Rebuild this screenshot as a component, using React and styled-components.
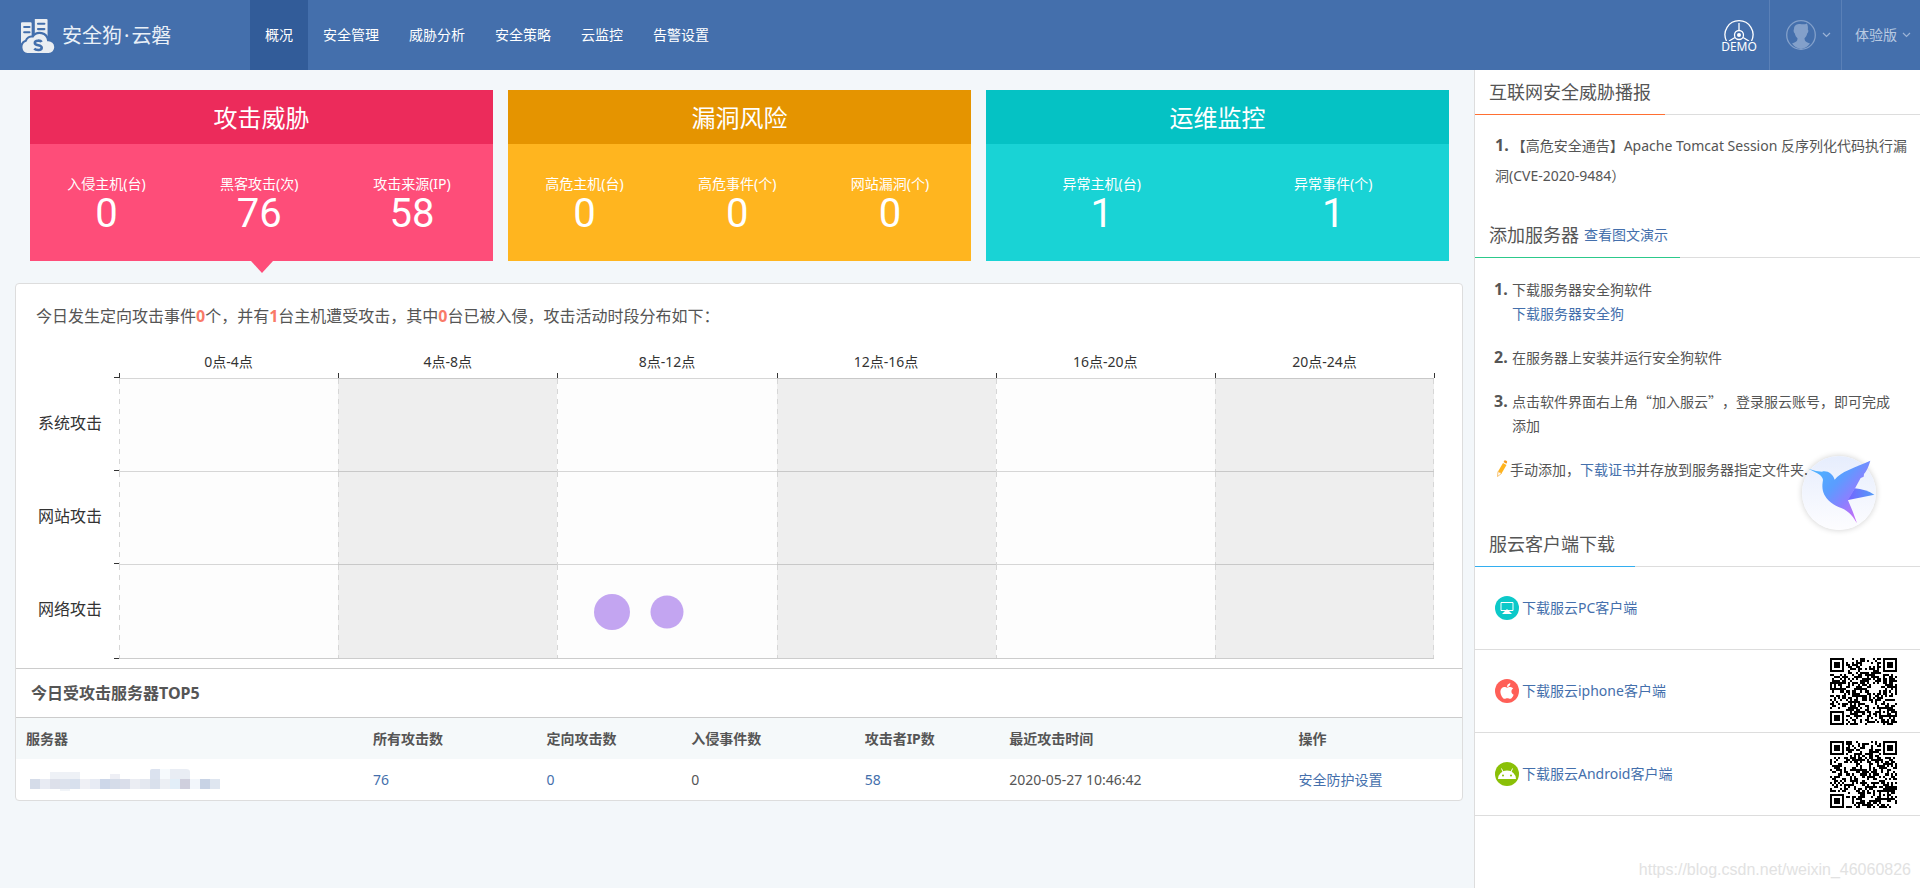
import React from 'react'
import styled, { createGlobalStyle } from 'styled-components'
import { FaApple } from 'react-icons/fa'

const navItems = ['概况', '安全管理', '威胁分析', '安全策略', '云监控', '告警设置']

const cards = [
  {
    title: '攻击威胁',
    head: '#ec2b5b',
    body: '#fe4d79',
    active: true,
    stats: [
      { label: '入侵主机(台)', value: 0 },
      { label: '黑客攻击(次)', value: 76 },
      { label: '攻击来源(IP)', value: 58 },
    ],
  },
  {
    title: '漏洞风险',
    head: '#e59400',
    body: '#ffb51f',
    stats: [
      { label: '高危主机(台)', value: 0 },
      { label: '高危事件(个)', value: 0 },
      { label: '网站漏洞(个)', value: 0 },
    ],
  },
  {
    title: '运维监控',
    head: '#05c2c4',
    body: '#19d3d5',
    stats: [
      { label: '异常主机(台)', value: 1 },
      { label: '异常事件(个)', value: 1 },
    ],
  },
]

const periods = ['0点-4点', '4点-8点', '8点-12点', '12点-16点', '16点-20点', '20点-24点']

const attackRows = [
  { name: '系统攻击', events: [] },
  { name: '网站攻击', events: [] },
  {
    name: '网络攻击',
    events: [
      { hour: 9, size: 36 },
      { hour: 10, size: 33 },
    ],
  },
]

const columns = [
  { name: '服务器', width: '24%' },
  { name: '所有攻击数', width: '12%' },
  { name: '定向攻击数', width: '10%' },
  { name: '入侵事件数', width: '12%' },
  { name: '攻击者IP数', width: '10%' },
  { name: '最近攻击时间', width: '20%' },
  { name: '操作', width: '12%' },
]

const maskColors = [
  '#d5dce9', '#e8ebf3', '#dde0ea', '#dce2ed', '#d8e0ed', '#eff0f5', '#e7ebf4',
  '#cdd7e9', '#d5dce9', '#dadeea', '#ebedf3', '#e4e8f0', '#d9e0ec', '#eceff4',
  '#e2eef8', '#cfcfdd', '#f2f6fb', '#c8d3e5', '#dfe6f0',
]

const LogoIcon = () => (
  <svg width='34' height='34' viewBox='1 1 32 32' aria-hidden='true'>
    <g fill='#ebeef2'>
      <path d='M1 5a1 1 0 0 1 1-1h8a1 1 0 0 1 1 1v13l-5 3-5 7z' />
      <path d='M14 1h11a1 1 0 0 1 1 1v16H14z' />
    </g>
    <path
      d='M4 8.500h5M4 13.500h5M17 5.500h6M17 10.500h6'
      stroke='#446fac'
      strokeWidth='2'
      strokeLinecap='round'
    />
    <path
      d='M7 34a6.500 6.500 0 0 1-1.500-12.500A6 6 0 0 1 12 17.500a8 8 0 0 1 14.500 3.500A6.500 6.500 0 0 1 27 34z'
      fill='#ebeef2'
      stroke='#446fac'
      strokeWidth='2'
    />
    <path
      d='M20.500 22.500c-1-1.500-6.500-1.800-6.500 1 0 3 6.500 1.500 6.500 4.500 0 2.800-5.500 2.500-7 .8'
      fill='none'
      stroke='#446fac'
      strokeWidth='2.400'
    />
  </svg>
)

const DemoIcon = () => (
  <svg width='32' height='21' viewBox='0 0 32 21' fill='none' aria-hidden='true'>
    <path d='M3.500 21a14 14 0 1 1 25 0' stroke='#fff' strokeWidth='1.300' />
    <path d='M16 3v7M12 17.500l-6 3.500M20 17.500l6 3.500' stroke='#fff' strokeWidth='1.300' />
    <circle cx='16' cy='15' r='4.500' stroke='#fff' strokeWidth='1.300' />
    <circle cx='16' cy='15' r='2' fill='#fff' />
  </svg>
)

const AvatarIcon = () => (
  <svg width='32' height='32' viewBox='0 0 32 32' aria-hidden='true'>
    <circle cx='16' cy='16' r='14.300' fill='none' stroke='#83a0ca' strokeWidth='1.300' />
    <path
      d='M9 10c0-4 3-5 6-5 2 0 4 1 7-.5.8 2 1.200 4 .8 6 1 .5.600 3-.5 3.700-.5 2.300-1.500 4-2.800 5 .2 3 1.500 4 5.500 5.300A14 14 0 0 1 16 30a14 14 0 0 1-9-5.500c4-1.300 5.500-2.300 5.500-5.300-1.300-1-2.300-2.700-2.800-5-1.100-.7-1.500-3.200-.7-4.200z'
      fill='#83a0ca'
    />
  </svg>
)

const Chevron = () => (
  <svg width='9' height='6' viewBox='0 0 9 6' fill='none' aria-hidden='true'>
    <path d='M1 1l3.500 3.500L8 1' stroke='#9db4d6' strokeWidth='1.200' />
  </svg>
)

const PencilIcon = () => (
  <svg width='12' height='18' viewBox='0 0 12 18' aria-hidden='true'>
    <path d='M7.500 2l1-1.500c.5-.6 3 .9 2.700 1.600l-.8 1.600z' fill='#f79a1c' />
    <path d='M7 3l3.500 2-5 8.500L2 11.500z' fill='#ffb41e' />
    <path d='M2 11.500l3.500 2-4 3z' fill='#fff' stroke='#f5b552' strokeWidth='.8' />
  </svg>
)

const BirdIcon = () => (
  <svg width='74' height='74' viewBox='0 0 222 222' aria-hidden='true'>
    <defs>
      <linearGradient id='bird' x1='0.1' y1='0.2' x2='0.85' y2='0.9'>
        <stop offset='0' stopColor='#4fb0ff' />
        <stop offset='0.35' stopColor='#5b9dff' />
        <stop offset='0.65' stopColor='#8a80ff' />
        <stop offset='1' stopColor='#cf6cf5' />
      </linearGradient>
      <linearGradient id='tail' x1='0' y1='0' x2='1' y2='0'>
        <stop offset='0' stopColor='#7463ff' />
        <stop offset='1' stopColor='#539df8' />
      </linearGradient>
    </defs>
    <path d='M158 97q32 2 59 19l-82 17z' fill='url(#tail)' />
    <path
      d='M19 38q22 8 41 9c16-4 32 6 38 24 17-24 60-36 107-57-5 18-12 32-19 40l-1 8-9 4-16 29-22 38c10 22 19 45 27 69-10-17-20-31-39-42-22-11-43-16-59-44-8-18-6-32-4-44-1-13-14-20-44-34z'
      fill='url(#bird)'
    />
  </svg>
)

const PcIcon = () => (
  <svg width='14' height='14' viewBox='0 0 14 14' fill='none' aria-hidden='true'>
    <path d='M1 1.500h12v8H1z' stroke='#fff' />
    <path d='M7 8l5 5H2z' fill='#fff' />
  </svg>
)

const AndroidIcon = () => (
  <svg width='20' height='14' viewBox='0 0 20 14' aria-hidden='true'>
    <path d='M1 12a9 8.500 0 0 1 18 0z' fill='#fff' />
    <path d='M6 5L4.500 1.500M14 5l1.500-3.500' stroke='#fff' />
    <circle cx='6' cy='8.500' r='1' fill='#8ac007' />
    <circle cx='14' cy='8.500' r='1' fill='#8ac007' />
  </svg>
)

const QR_SIZE = 33

const inSquare = (x, y, left, top, size) =>
  x >= left && x < left + size && y >= top && y < top + size

// finder and alignment squares are fixed, the rest is filled from the seed
const buildQr = (seed) => {
  let state = seed
  let path = ''
  const finders = [
    [0, 0],
    [QR_SIZE - 7, 0],
    [0, QR_SIZE - 7],
  ]
  for (let y = 0; y < QR_SIZE; y++) {
    for (let x = 0; x < QR_SIZE; x++) {
      state = (state * 1103515245 + 12345) % 2147483648
      let dark = state / 2147483648 > 0.5
      finders.forEach(([fx, fy]) => {
        if (inSquare(x, y, fx - 1, fy - 1, 9)) {
          dark =
            inSquare(x, y, fx, fy, 7) &&
            (!inSquare(x, y, fx + 1, fy + 1, 5) || inSquare(x, y, fx + 2, fy + 2, 3))
        }
      })
      if (inSquare(x, y, 24, 24, 5)) {
        dark = !inSquare(x, y, 25, 25, 3) || (x === 26 && y === 26)
      }
      if (dark) path += `M${x} ${y}h1v1h-1z`
    }
  }
  return path
}

const QrCode = ({ seed, label }) => (
  <svg
    width='67'
    height='67'
    viewBox={`0 0 ${QR_SIZE} ${QR_SIZE}`}
    shapeRendering='crispEdges'
    role='img'
    aria-label={label}
  >
    <path d={buildQr(seed)} />
  </svg>
)

const MaskedName = () => (
  <svg width='190' height='22' viewBox='0 0 190 22' aria-hidden='true'>
    <path d='M20 3h30v8H20z' fill='#eef1f6' />
    <path d='M80 5h10v6H80z' fill='#eeeff5' />
    <path d='M120 2q0-2 2-2h8v11h-10z' fill='#dbe2ef' />
    <path d='M130 0h10v11h-10z' fill='#f6fafd' />
    <path d='M140 0h16q4 0 4 3v8h-20z' fill='#e9edf4' />
    <path d='M30 19h10v3H30z' fill='#f1f4f8' />
    {maskColors.map((color, index) => (
      <rect key={index} x={index * 10} y='10' width='10' height='10' fill={color} />
    ))}
  </svg>
)

const Header = () => (
  <TopBar>
    <Brand href='#'>
      <LogoIcon />
      <span>
        安全狗<i>·</i>云磐
      </span>
    </Brand>
    <Nav>
      {navItems.map((item, index) => (
        <NavLink key={item} href='#' $active={index === 0}>
          {item}
        </NavLink>
      ))}
    </Nav>
    <DemoButton type='button'>
      <DemoIcon />
      DEMO
    </DemoButton>
    <TopButton type='button' aria-label='账号' $width={72}>
      <AvatarIcon />
      <Chevron />
    </TopButton>
    <TopButton type='button' $width={79}>
      体验版
      <Chevron />
    </TopButton>
  </TopBar>
)

const Cards = () => (
  <CardRow>
    {cards.map((card) => (
      <Card key={card.title} $bg={card.body} $active={card.active}>
        <CardTitle $bg={card.head}>{card.title}</CardTitle>
        <Stats>
          {card.stats.map((stat) => (
            <Stat key={stat.label} $width={card.stats.length === 3 ? '33%' : '50%'}>
              <dt>{stat.label}</dt>
              <dd>{stat.value}</dd>
            </Stat>
          ))}
        </Stats>
      </Card>
    ))}
  </CardRow>
)

const AttackChart = () => (
  <Chart>
    <span />
    {periods.map((period) => (
      <Period key={period}>{period}</Period>
    ))}
    {attackRows.map((row) => (
      <React.Fragment key={row.name}>
        <RowName>{row.name}</RowName>
        {periods.map((period, index) => (
          <Cell key={period} $dark={index % 2 === 1}>
            {row.events
              .filter(({ hour }) => Math.floor(hour / 4) === index)
              .map(({ hour, size }) => (
                <Bubble
                  key={hour}
                  style={{ left: `${(hour % 4) * 25}%`, width: size, height: size }}
                />
              ))}
          </Cell>
        ))}
      </React.Fragment>
    ))}
  </Chart>
)

const ServerTable = () => (
  <Table>
    <thead>
      <tr>
        {columns.map(({ name, width }) => (
          <Th key={name} $width={width}>
            {name}
          </Th>
        ))}
      </tr>
    </thead>
    <tbody>
      <tr>
        <td>
          <MaskedName />
        </td>
        <td>
          <Link href='#'>76</Link>
        </td>
        <td>
          <Link href='#'>0</Link>
        </td>
        <td>0</td>
        <td>
          <Link href='#'>58</Link>
        </td>
        <td>2020-05-27 10:46:42</td>
        <td>
          <Link href='#'>安全防护设置</Link>
        </td>
      </tr>
    </tbody>
  </Table>
)

const Sidebar = () => (
  <Aside>
    <SideTitle>
      <SideName $color='#ff6f32' $width={190}>
        互联网安全威胁播报
      </SideName>
    </SideTitle>
    <News>
      <b>1.</b>
      【高危安全通告】Apache Tomcat Session 反序列化代码执行漏洞(CVE-2020-9484）
    </News>
    <SideTitle>
      <SideName $color='#2cc98b' $width={205}>
        添加服务器
        <Link href='#'>查看图文演示</Link>
      </SideName>
    </SideTitle>
    <Steps>
      <Step>
        <b>1.</b>
        <div>
          下载服务器安全狗软件
          <br />
          <Link href='#'>下载服务器安全狗</Link>
        </div>
      </Step>
      <Step>
        <b>2.</b>
        <div>在服务器上安装并运行安全狗软件</div>
      </Step>
      <Step>
        <b>3.</b>
        <div>点击软件界面右上角“加入服云”，登录服云账号，即可完成添加</div>
      </Step>
      <Manual>
        <PencilIcon />
        <div>
          手动添加，<Link href='#'>下载证书</Link>并存放到服务器指定文件夹.
        </div>
      </Manual>
    </Steps>
    <SideTitle>
      <SideName $color='#33aef0' $width={160}>
        服云客户端下载
      </SideName>
    </SideTitle>
    <Download>
      <Badge $bg='#0cc9c9'>
        <PcIcon />
      </Badge>
      <Link href='#'>下载服云PC客户端</Link>
    </Download>
    <Download>
      <Badge $bg='#ff5f57'>
        <FaApple size={18} />
      </Badge>
      <Link href='#'>下载服云iphone客户端</Link>
      <QrCode seed={4711} label='iphone客户端' />
    </Download>
    <Download>
      <Badge $bg='#8ac007'>
        <AndroidIcon />
      </Badge>
      <Link href='#'>下载服云Android客户端</Link>
      <QrCode seed={90125} label='Android客户端' />
    </Download>
    <Watermark>https://blog.csdn.net/weixin_46060826</Watermark>
  </Aside>
)

const App = () => {
  return (
    <>
      <GlobalStyle />
      <Header />
      <Page>
        <Main>
          <Cards />
          <Panel>
            <Summary>
              今日发生定向攻击事件<b>0</b>个，并有<b>1</b>台主机遭受攻击，其中<b>0</b>
              台已被入侵，攻击活动时段分布如下：
            </Summary>
            <AttackChart />
            <PanelTitle>今日受攻击服务器TOP5</PanelTitle>
            <ServerTable />
          </Panel>
        </Main>
        <Sidebar />
      </Page>
      <FloatButton type='button' aria-label='迅雷'>
        <BirdIcon />
      </FloatButton>
    </>
  )
}

const GlobalStyle = createGlobalStyle`
  * {
    box-sizing: border-box;
  }
  body {
    margin: 0;
    background: #f3f7fa;
    color: #555;
    font-family: 'Noto Sans', 'Noto Sans CJK SC', sans-serif;
    font-size: 14px;
    line-height: 24px;
  }
  h2, p, dl, dd, ol {
    margin: 0;
    padding: 0;
  }
  button {
    border: 0;
    padding: 0;
    background: none;
    font: inherit;
    cursor: pointer;
  }
  svg {
    display: block;
    flex: none;
  }
`

const Link = styled.a`
  color: #446fac;
  font-size: 14px;
  text-decoration: none;
`

const TopBar = styled.header`
  display: flex;
  height: 70px;
  background: #446fac;
`

const Brand = styled.a`
  display: flex;
  align-items: center;
  gap: 7px;
  width: 250px;
  padding: 2px 0 0 21px;
  color: #e9eff7;
  font-size: 20px;
  text-decoration: none;
  i {
    padding: 0 2px;
    font-style: normal;
  }
`

const Nav = styled.nav`
  display: flex;
  flex: 1;
`

const NavLink = styled.a`
  padding: 0 15px;
  line-height: 70px;
  color: #fff;
  text-decoration: none;
  background: ${({ $active }) => ($active ? '#325c99' : 'none')};
`

const DemoButton = styled.button`
  display: flex;
  flex-direction: column;
  align-items: center;
  justify-content: center;
  width: 60px;
  color: #fff;
  && {
    padding-top: 2px;
    font-size: 12px;
    line-height: 12px;
  }
`

const TopButton = styled.button`
  display: flex;
  align-items: center;
  justify-content: center;
  gap: 5px;
  width: ${({ $width }) => $width}px;
  color: #b9cae2;
  && {
    padding-left: 4px;
    border-left: 1px solid #5a80b7;
  }
`

const Page = styled.div`
  display: flex;
  min-height: calc(100vh - 70px);
`

const Main = styled.main`
  flex: 1;
  min-width: 0;
  padding: 20px 11px 20px 15px;
`

const CardRow = styled.div`
  display: grid;
  grid-template-columns: repeat(3, 1fr);
  gap: 15px;
  padding: 0 14px 0 15px;
`

const Card = styled.section`
  position: relative;
  color: #fff;
  text-align: center;
  background: ${({ $bg }) => $bg};
  &::after {
    content: '';
    display: ${({ $active }) => ($active ? 'block' : 'none')};
    position: absolute;
    top: 100%;
    left: calc(50% - 11px);
    border: 11px solid transparent;
    border-top: 12px solid ${({ $bg }) => $bg};
    border-bottom: 0;
  }
`

const CardTitle = styled.h2`
  && {
    padding-top: 2px;
  }
  font-size: 24px;
  font-weight: 400;
  line-height: 52px;
  background: ${({ $bg }) => $bg};
`

const Stats = styled.dl`
  display: flex;
  && {
    padding: 30px 0 27px;
  }
`

const Stat = styled.div`
  width: ${({ $width }) => $width};
  line-height: 20px;
  dd {
    font-family: Roboto, sans-serif;
    font-size: 40px;
    line-height: 40px;
  }
`

const Panel = styled.section`
  margin-top: 22px;
  background: #fff;
  border: 1px solid #ddd;
  border-radius: 4px;
`

const Summary = styled.p`
  && {
    padding: 20px 20px 24px;
  }
  font-size: 16px;
  b {
    color: #f97a68;
  }
`

const Chart = styled.div`
  display: grid;
  grid-template-columns: 103px repeat(6, 1fr);
  grid-template-rows: 26px 93px 93px 94px;
  margin: 0 28px 10px 0;
  color: #333;
`

const Period = styled.div`
  position: relative;
  text-align: center;
  line-height: 20px;
  &::before,
  &:nth-child(7)::after {
    content: '';
    position: absolute;
    bottom: 0;
    left: 0;
    width: 1px;
    height: 5px;
    background: #333;
  }
  &:nth-child(7)::after {
    left: 100%;
  }
`

const RowName = styled.div`
  position: relative;
  padding-left: 22px;
  font-size: 16px;
  line-height: 90px;
  &::before,
  &:nth-last-child(7)::after {
    content: '';
    position: absolute;
    top: -1px;
    right: 0;
    width: 5px;
    height: 1px;
    background: #333;
  }
  &:nth-last-child(7)::after {
    top: 100%;
  }
`

const dashes = 'repeating-linear-gradient(#d6d6d6 0 5px, transparent 5px 10px)'

const Cell = styled.div`
  position: relative;
  border-top: 1px solid ${({ $dark }) => ($dark ? '#c8c8c8' : '#d6d6d6')};
  background: ${dashes} left / 1px 100% no-repeat,
    ${({ $dark }) => ($dark ? '#eee' : '#fdfdfd')};
  &:nth-child(7n) {
    background: ${dashes} left / 1px 100% no-repeat, ${dashes} right / 1px 100% no-repeat, #eee;
  }
  &:nth-last-child(-n + 6) {
    box-shadow: 0 1px #ccc;
  }
`

const Bubble = styled.span`
  position: absolute;
  top: 50%;
  border-radius: 50%;
  background: #c3a5f1;
  transform: translate(-50%, -50%);
`

const PanelTitle = styled.h2`
  && {
    padding: 0 15px;
  }
  font-size: 16px;
  line-height: 48px;
  border-top: 1px solid #ccc;
  border-bottom: 1px solid #ccc;
`

const Table = styled.table`
  width: 100%;
  table-layout: fixed;
  border-collapse: collapse;
  td {
    height: 41px;
    padding: 0 10px;
  }
  td svg {
    margin-left: 4px;
  }
`

const Th = styled.th`
  width: ${({ $width }) => $width};
  height: 41px;
  padding: 0 10px;
  text-align: left;
  background: #f5f9fa;
`

const Aside = styled.aside`
  position: relative;
  width: 446px;
  background: #fff;
  border-left: 1px solid #ddd;
`

const SideTitle = styled.div`
  display: flex;
  height: 45px;
  border-bottom: 1px solid #ddd;
`

const SideName = styled.h2`
  display: flex;
  gap: 5px;
  width: ${({ $width }) => $width}px;
  height: 45px;
  && {
    padding-left: 14px;
  }
  font-size: 18px;
  font-weight: 400;
  line-height: 44px;
  border-bottom: 1px solid ${({ $color }) => $color};
`

const News = styled.p`
  && {
    padding: 15px 5px 22px 20px;
  }
  line-height: 30px;
  b {
    margin-right: 3px;
    font-size: 16px;
  }
`

const Steps = styled.ol`
  display: flex;
  flex-direction: column;
  gap: 20px;
  && {
    padding: 19px 26px 41px 19px;
  }
  list-style: none;
  font-family: 'Noto Sans CJK SC', sans-serif;
  text-spacing-trim: space-all;
`

const Step = styled.li`
  display: flex;
  b {
    width: 18px;
    font-family: 'Noto Sans', sans-serif;
    font-size: 16px;
  }
  div {
    flex: 1;
  }
`

const Manual = styled.li`
  display: flex;
  align-items: center;
  gap: 2px;
  padding-left: 2px;
`

const Download = styled.div`
  display: flex;
  align-items: center;
  gap: 3px;
  height: 83px;
  padding: 0 23px 0 20px;
  border-bottom: 1px solid #ddd;
  > svg {
    margin-left: auto;
  }
`

const Badge = styled.span`
  display: flex;
  align-items: center;
  justify-content: center;
  width: 24px;
  height: 24px;
  color: #fff;
  border-radius: 50%;
  background: ${({ $bg }) => $bg};
`

const Watermark = styled.div`
  position: absolute;
  right: 9px;
  bottom: 6px;
  color: #e2e2e2;
  font-family: 'Liberation Sans', sans-serif;
  font-size: 16px;
`

const FloatButton = styled.button`
  position: fixed;
  top: 456px;
  right: 44px;
  && {
    border-radius: 50%;
    background: linear-gradient(#e6edfd, #fdfdff);
    box-shadow: 0 0 6px rgba(0, 0, 0, 0.2);
  }
`

export default App
